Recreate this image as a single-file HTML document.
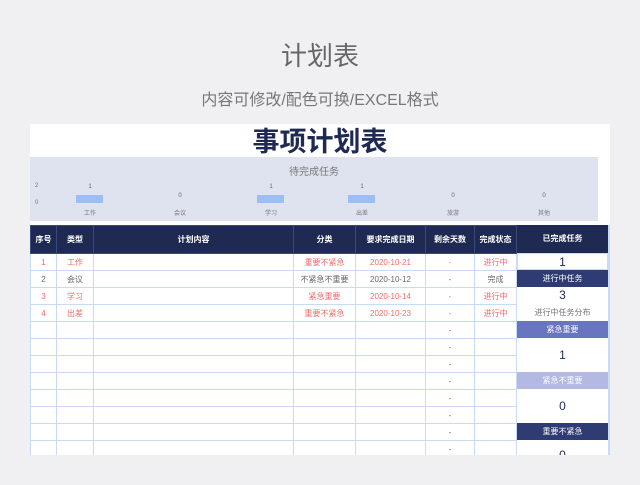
<!DOCTYPE html><html><head><meta charset="utf-8"><style>
*{margin:0;padding:0;box-sizing:border-box}
body{width:640px;height:485px;background:#f0f0f2;position:relative;overflow:hidden;font-family:"Liberation Sans","Noto Sans CJK SC",sans-serif}
.a{position:absolute}
.c{position:absolute;text-align:center;white-space:nowrap}
table{position:absolute;left:30px;top:225px;border-collapse:collapse;font-size:8px;table-layout:fixed}
td{height:17px;border:1px solid #c8daf5;text-align:center;color:#666;background:#fff;padding:0;white-space:nowrap}
th{height:28px;background:#1f2a52;color:#fff;border:1px solid #3b4a7a;font-size:8px;font-weight:bold}
.r td{color:#f26b6b}
.p div{position:absolute;left:517px;width:91px;text-align:center;font-size:8px;white-space:nowrap}
</style></head><body>
<div class="c" style="left:0;width:640px;top:36px;font-size:26px;color:#666">计划表</div>
<div class="c" style="left:0;width:640px;top:86px;font-size:16px;color:#777">内容可修改/配色可换/EXCEL格式</div>
<div class="a" style="left:30px;top:124px;width:580px;height:331px;background:#fff"></div>
<div class="c" style="left:30px;width:580px;top:120px;font-size:27px;font-weight:bold;color:#1f2a52">事项计划表</div>
<div class="a" style="left:30px;top:157px;width:568px;height:64px;background:#dfe3f0"></div>
<div class="c" style="left:30px;width:568px;top:163px;font-size:10px;color:#777">待完成任务</div>
<div class="a" style="left:35px;top:183px;font-size:6px;color:#777">2</div>
<div class="a" style="left:35px;top:200px;font-size:6px;color:#777">0</div>
<div class="a" style="left:76px;top:195px;width:27px;height:8px;background:#9dbef5"></div>
<div class="a" style="left:257px;top:195px;width:27px;height:8px;background:#9dbef5"></div>
<div class="a" style="left:348px;top:195px;width:27px;height:8px;background:#9dbef5"></div>
<div class="c" style="left:80px;width:20px;top:184px;font-size:6px;color:#666">1</div>
<div class="c" style="left:170px;width:20px;top:193px;font-size:6px;color:#666">0</div>
<div class="c" style="left:261px;width:20px;top:184px;font-size:6px;color:#666">1</div>
<div class="c" style="left:352px;width:20px;top:184px;font-size:6px;color:#666">1</div>
<div class="c" style="left:443px;width:20px;top:193px;font-size:6px;color:#666">0</div>
<div class="c" style="left:534px;width:20px;top:193px;font-size:6px;color:#666">0</div>
<div class="c" style="left:80px;width:20px;top:208px;font-size:6px;color:#777">工作</div>
<div class="c" style="left:170px;width:20px;top:208px;font-size:6px;color:#777">会议</div>
<div class="c" style="left:261px;width:20px;top:208px;font-size:6px;color:#777">学习</div>
<div class="c" style="left:352px;width:20px;top:208px;font-size:6px;color:#777">出差</div>
<div class="c" style="left:443px;width:20px;top:208px;font-size:6px;color:#777">旅游</div>
<div class="c" style="left:534px;width:20px;top:208px;font-size:6px;color:#777">其他</div>
<table>
<colgroup><col style="width:26px"><col style="width:37px"><col style="width:200px"><col style="width:62px"><col style="width:70px"><col style="width:49px"><col style="width:42px"></colgroup>
<tr><th>序号</th><th>类型</th><th>计划内容</th><th>分类</th><th>要求完成日期</th><th>剩余天数</th><th>完成状态</th></tr>
<tr class="r"><td>1</td><td>工作</td><td></td><td>重要不紧急</td><td>2020-10-21</td><td>-</td><td>进行中</td></tr>
<tr><td>2</td><td>会议</td><td></td><td>不紧急不重要</td><td>2020-10-12</td><td>-</td><td>完成</td></tr>
<tr class="r"><td>3</td><td>学习</td><td></td><td>紧急重要</td><td>2020-10-14</td><td>-</td><td>进行中</td></tr>
<tr class="r"><td>4</td><td>出差</td><td></td><td>重要不紧急</td><td>2020-10-23</td><td>-</td><td>进行中</td></tr>
<tr><td></td><td></td><td></td><td></td><td></td><td>-</td><td></td></tr>
<tr><td></td><td></td><td></td><td></td><td></td><td>-</td><td></td></tr>
<tr><td></td><td></td><td></td><td></td><td></td><td>-</td><td></td></tr>
<tr><td></td><td></td><td></td><td></td><td></td><td>-</td><td></td></tr>
<tr><td></td><td></td><td></td><td></td><td></td><td>-</td><td></td></tr>
<tr><td></td><td></td><td></td><td></td><td></td><td>-</td><td></td></tr>
<tr><td></td><td></td><td></td><td></td><td></td><td>-</td><td></td></tr>
<tr><td></td><td></td><td></td><td></td><td></td><td>-</td><td></td></tr>
</table>
<div class="a" style="left:30px;top:455px;width:610px;height:30px;background:#f0f0f2"></div>
<div class="p">
<div style="top:225px;height:28px;line-height:28px;background:#1f2a52;color:#fff;font-weight:bold">已完成任务</div>
<div style="top:253px;height:17px;line-height:17px;color:#1f2a52;font-size:12px;border:1px solid #c8daf5">1</div>
<div style="top:270px;height:17px;line-height:17px;background:#2f3b73;color:#fff">进行中任务</div>
<div style="top:287px;height:17px;line-height:17px;color:#1f2a52;font-size:12px">3</div>
<div style="top:304px;height:17px;line-height:17px;color:#777">进行中任务分布</div>
<div style="top:321px;height:17px;line-height:17px;background:#6876c0;color:#fff">紧急重要</div>
<div style="top:338px;height:34px;line-height:34px;color:#1f2a52;font-size:12px">1</div>
<div style="top:372px;height:17px;line-height:17px;background:#b3b9e0;color:#fff">紧急不重要</div>
<div style="top:389px;height:34px;line-height:34px;color:#1f2a52;font-size:12px">0</div>
<div style="top:423px;height:17px;line-height:17px;background:#2f3b73;color:#fff">重要不紧急</div>
<div style="top:448px;height:7px;overflow:hidden;line-height:14px;color:#1f2a52;font-size:12px">0</div>
</div>
<div class="a" style="left:608px;top:225px;width:2px;height:230px;background:#c8daf5"></div>
</body></html>
